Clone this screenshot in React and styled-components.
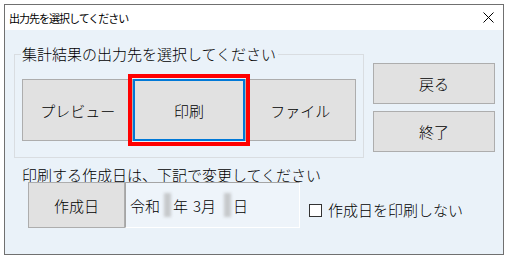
import React from "react";
import styled, { createGlobalStyle } from "styled-components";

const Global = createGlobalStyle`
  html, body { margin: 0; padding: 0; background: #ffffff; }
  body { font-family: "Noto Sans CJK JP", "Noto Sans", sans-serif; color: #000; font-weight: 300; }
  * { box-sizing: border-box; }
`;

const Window = styled.div`
  margin: 4px 0 0 4px;
  width: 500px;
  height: 251px;
  border: 1px solid #707070;
  display: flex;
  flex-direction: column;
  background: #fff;
`;

const TitleBar = styled.div`
  height: 25px;
  flex: none;
  display: flex;
  align-items: center;
  justify-content: space-between;
  padding: 0 9px 0 4px;
  background: #ffffff;
`;

const TitleText = styled.span`
  font-size: 11px;
  letter-spacing: -1px;
  line-height: 14px;
  font-weight: 400;
`;

const Content = styled.div`
  flex: 1;
  background: #eaf2f9;
  padding: 15px 8px 0 9px;
  display: flex;
  flex-direction: column;
`;

const TopRow = styled.div`
  display: flex;
  align-items: flex-start;
  gap: 9px;
`;

const Group = styled.fieldset`
  margin: 0;
  width: 351px;
  min-width: 0;
  padding: 0 7px 16px 7px;
  border: 1px solid #d9dde1;
`;

const Legend = styled.legend`
  font-size: 15px;
  line-height: 18px;
  padding: 0 2px 0 1px;
  margin-left: -1px;
`;

const ChoiceGrid = styled.div`
  margin-top: 16px;
  display: grid;
  grid-template-columns: repeat(3, 1fr);
`;

const Button = styled.button`
  font-family: inherit;
  font-weight: inherit;
  font-size: 15px;
  color: #000;
  background: #e1e1e1;
  border: 1px solid #adadad;
  padding: 0;
  margin: 0;
  height: ${(p) => p.$h || 62}px;
  width: ${(p) => (p.$w ? `${p.$w}px` : "auto")};
  cursor: default;
`;

const FocusedButton = styled(Button)`
  border: 2px solid #0078d7;
  outline: 4px solid #ff0000;
  outline-offset: 1px;
  position: relative;
  z-index: 1;
`;

const SideColumn = styled.div`
  margin-top: 18px;
  display: flex;
  flex-direction: column;
  gap: 7px;
`;

const SectionLabel = styled.div`
  margin: 10px 0 0 8px;
  font-size: 15px;
  line-height: 14px;
  white-space: nowrap;
`;

const DateRow = styled.div`
  margin: 0 0 0 14px;
  display: flex;
  align-items: flex-start;
`;

const DateField = styled.div`
  width: 175px;
  height: 46px;
  display: flex;
  align-items: center;
  padding-left: 4px;
  background: #eef4fa;
  border-top: 1px solid #a5a5a5;
  border-left: 1px solid #a5a5a5;
  border-right: 1px solid #ffffff;
  border-bottom: 1px solid #ffffff;
  font-size: 15px;
  white-space: nowrap;
`;

const Part = styled.span`
  margin-left: ${(p) => p.$ml || 0}px;
`;

const Redact = styled.span`
  display: inline-block;
  width: 7px;
  height: 24px;
  margin-left: ${(p) => p.$ml || 0}px;
  background: #c6c9cc;
  filter: blur(1.5px);
`;

const CheckArea = styled.label`
  margin: 19px 0 0 9px;
  display: flex;
  align-items: center;
  font-size: 15px;
  line-height: 18px;
  white-space: nowrap;
`;

const Box = styled.span`
  width: 13px;
  height: 13px;
  border: 1px solid #333333;
  background: #ffffff;
  margin-right: 6px;
`;

const CloseIcon = () => (
  <svg width="11" height="11" viewBox="0 0 11 11">
    <path d="M0.5 0.5 L10.5 10.5 M10.5 0.5 L0.5 10.5" stroke="#000" strokeWidth="1" fill="none" />
  </svg>
);

export default function App() {
  return (
    <>
      <Global />
      <Window>
        <TitleBar>
          <TitleText>出力先を選択してください</TitleText>
          <CloseIcon />
        </TitleBar>
        <Content>
          <TopRow>
            <Group>
              <Legend>集計結果の出力先を選択してください</Legend>
              <ChoiceGrid>
                <Button>プレビュー</Button>
                <FocusedButton>印刷</FocusedButton>
                <Button>ファイル</Button>
              </ChoiceGrid>
            </Group>
            <SideColumn>
              <Button $w={122} $h={41}>戻る</Button>
              <Button $w={122} $h={41}>終了</Button>
            </SideColumn>
          </TopRow>
          <SectionLabel>印刷する作成日は、下記で変更してください</SectionLabel>
          <DateRow>
            <Button $w={97} $h={46}>作成日</Button>
            <DateField>
              <Part>令和</Part>
              <Redact $ml={4} />
              <Part $ml={2}>年</Part>
              <Part $ml={5}>3月</Part>
              <Redact $ml={8} />
              <Part $ml={2}>日</Part>
            </DateField>
            <CheckArea>
              <Box />
              作成日を印刷しない
            </CheckArea>
          </DateRow>
        </Content>
      </Window>
    </>
  );
}
